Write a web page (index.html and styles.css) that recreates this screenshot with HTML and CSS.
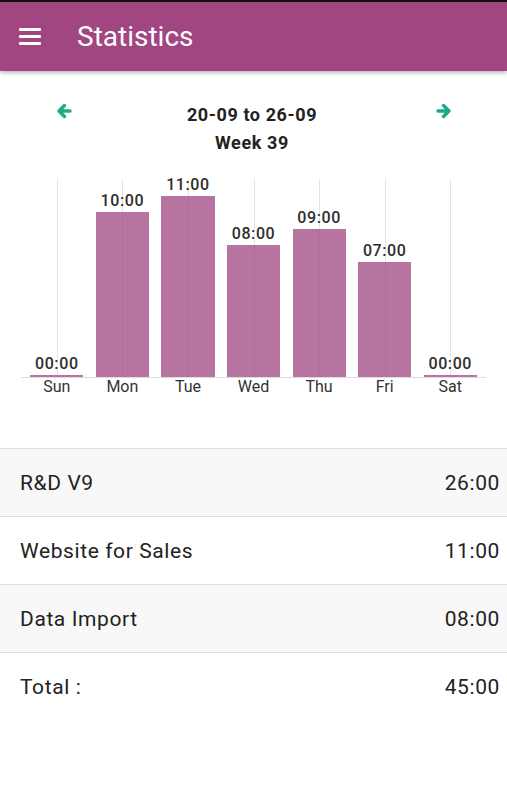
FILE: index.html
```html
<!DOCTYPE html>
<html lang="en">
<head>
<meta charset="utf-8">
<title>Statistics</title>
<link rel="stylesheet" href="styles.css">
</head>
<body>
<header class="appbar">
  <div class="hamburger" aria-label="Menu"><span></span><span></span><span></span></div>
  <h1 class="title">Statistics</h1>
</header>

<section class="week-nav">
  <button class="nav-btn" aria-label="Previous week">
    <svg width="16" height="16" viewBox="0 0 16 16"><path d="M14 8H3M8.5 2.5L3 8l5.5 5.5" fill="none" stroke="#1aab8b" stroke-width="3.4" stroke-linecap="round" stroke-linejoin="round"/></svg>
  </button>
  <div class="week-label">
    <div>20-09 to 26-09</div>
    <div>Week 39</div>
  </div>
  <button class="nav-btn" aria-label="Next week">
    <svg width="16" height="16" viewBox="0 0 16 16"><path d="M2 8h11M7.5 2.5L13 8l-5.5 5.5" fill="none" stroke="#1aab8b" stroke-width="3.4" stroke-linecap="round" stroke-linejoin="round"/></svg>
  </button>
</section>

<section class="chart">
  <div class="plot">
    <div class="col"><span class="val">00:00</span><div class="bar zero"></div></div>
    <div class="col"><span class="val">10:00</span><div class="bar" style="height:165px"></div></div>
    <div class="col"><span class="val">11:00</span><div class="bar" style="height:181.5px"></div></div>
    <div class="col"><span class="val">08:00</span><div class="bar" style="height:132px"></div></div>
    <div class="col"><span class="val">09:00</span><div class="bar" style="height:148.5px"></div></div>
    <div class="col"><span class="val">07:00</span><div class="bar" style="height:115.5px"></div></div>
    <div class="col"><span class="val">00:00</span><div class="bar zero"></div></div>
  </div>
  <div class="axis">
    <span>Sun</span><span>Mon</span><span>Tue</span><span>Wed</span><span>Thu</span><span>Fri</span><span>Sat</span>
  </div>
</section>

<ul class="projects">
  <li class="row shaded"><span>R&amp;D V9</span><span>26:00</span></li>
  <li class="row"><span>Website for Sales</span><span>11:00</span></li>
  <li class="row shaded"><span>Data Import</span><span>08:00</span></li>
  <li class="row"><span>Total :</span><span>45:00</span></li>
</ul>
</body>
</html>
```

FILE: styles.css
```css
* { box-sizing: border-box; }

body {
  margin: 0;
  background: #ffffff;
  font-family: Roboto, "Liberation Sans", Arial, sans-serif;
  color: #222222;
}

.appbar {
  height: 71px;
  border-top: 2px solid #111111;
  background: #a14680;
  display: flex;
  align-items: center;
  padding-left: 19px;
  box-shadow: 0 2px 4px rgba(0, 0, 0, 0.28);
  position: relative;
  z-index: 1;
}

.hamburger {
  width: 22px;
  display: flex;
  flex-direction: column;
  gap: 4px;
}

.hamburger span {
  display: block;
  height: 3px;
  background: #ffffff;
  border-radius: 1px;
}

.title {
  margin: 0 0 0 36px;
  font-size: 28px;
  font-weight: 400;
  color: #ffffff;
  line-height: 1;
}

.week-nav {
  margin-top: 30px;
  display: flex;
  justify-content: space-between;
  align-items: flex-start;
  padding: 0 55px 0 56px;
}

.nav-btn {
  border: 0;
  background: none;
  padding: 0;
  margin-top: 2px;
  width: 16px;
  height: 16px;
  display: flex;
}

.week-label {
  text-align: center;
  font-size: 18px;
  font-weight: 700;
  line-height: 28px;
  letter-spacing: 0.6px;
  color: #222222;
  margin-right: 4px;
}

.chart {
  margin: 22px 21px 0;
}

.plot {
  margin: 0 3px;
  height: 198px;
  display: flex;
}

.col {
  flex: 1;
  position: relative;
  display: flex;
  flex-direction: column;
  justify-content: flex-end;
  align-items: center;
}

.col::before {
  content: "";
  position: absolute;
  top: 0;
  bottom: 0;
  left: 50%;
  width: 1px;
  background: #e3e3e3;
}

.val {
  position: relative;
  flex-shrink: 0;
  font-size: 16px;
  font-weight: 500;
  line-height: 19px;
  letter-spacing: 0.6px;
  color: #2e2e2e;
  margin-bottom: 2px;
}

.bar {
  position: relative;
  flex-shrink: 0;
  width: 81%;
  background: rgba(160, 69, 130, 0.75);
}

.bar.zero {
  height: 2px;
}

.axis {
  border-top: 1px solid #dddddd;
  display: flex;
  padding: 0 3px;
}

.axis span {
  flex: 1;
  text-align: center;
  font-size: 16px;
  line-height: 18px;
  color: #333333;
}

.projects {
  list-style: none;
  margin: 52px 0 0;
  padding: 0;
}

.row {
  height: 68px;
  border-top: 1px solid #dddddd;
  display: flex;
  justify-content: space-between;
  align-items: center;
  padding: 0 7px 0 20px;
  font-size: 21px;
  letter-spacing: 0.6px;
  color: #222222;
}

.row.shaded {
  background: #f8f8f8;
}
```
